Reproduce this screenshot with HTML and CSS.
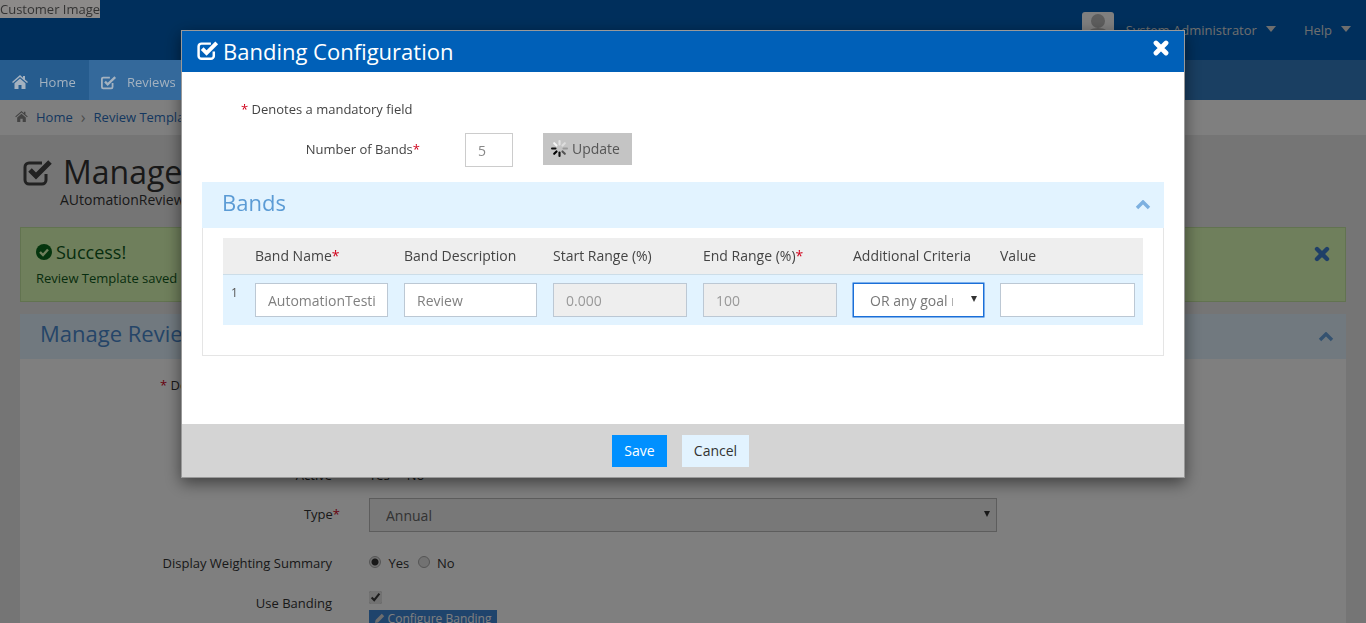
FILE: index.html
```html
<!DOCTYPE html>
<html lang="en">
<head>
    <meta charset="UTF-8">
    <meta name="viewport" content="width=device-width, initial-scale=1.0">
    <title>Banding Configuration</title>
    <link rel="stylesheet" href="styles.css">
</head>
<body>

<!-- page behind the dialog -->
<header class="topbar">
    <span class="customer-image">Customer Image</span>
    <div class="user-menu">
        <svg class="avatar" width="32" height="26" viewBox="0 0 32 26"><rect width="32" height="26" rx="3" fill="#fff"/><circle cx="16" cy="9" r="7" fill="#bbb"/><path d="M4 26c0-7 5-10 12-10s12 3 12 10z" fill="#bbb"/></svg>
        <span class="user-name">System Administrator</span><span class="caret"></span>
        <span class="help">Help</span><span class="caret"></span>
    </div>
</header>

<nav class="mainnav">
    <a class="nav-tab nav-home">
        <svg width="16" height="14" viewBox="0 0 16 14"><path d="M8 0 0 7l1 1 7-6 7 6 1-1-3-2.600V1h-2v1.800zM2.500 8.200V14H6.500V10h3v4h4V8.200L8 3.500z" fill="#a4b2c0"/></svg>
        Home
    </a>
    <a class="nav-tab nav-reviews">
        <svg width="16" height="15" viewBox="0 0 18 16"><path d="M13 8.500V13a1.500 1.500 0 0 1-1.500 1.500h-9A1.500 1.500 0 0 1 1 13V4a1.500 1.500 0 0 1 1.500-1.500H10" fill="none" stroke="#a4b2c0" stroke-width="2"/><path d="m4.500 7 3 3L16 2" fill="none" stroke="#a4b2c0" stroke-width="2.600"/></svg>
        Reviews
    </a>
</nav>

<div class="breadcrumb">
    <svg width="13" height="11" viewBox="0 0 16 14"><path d="M8 0 0 7l1 1 7-6 7 6 1-1-3-2.600V1h-2v1.800zM2.500 8.200V14H6.500V10h3v4h4V8.200L8 3.500z" fill="#888"/></svg>
    <a>Home</a>
    <span class="crumb-sep">&rsaquo;</span>
    <a>Review Templates</a>
</div>

<main class="content">
    <div class="page-title">
        <svg width="30" height="29" viewBox="0 0 30 29"><path d="M23 16v6a4 4 0 0 1-4 4H6a4 4 0 0 1-4-4V9a4 4 0 0 1 4-4h13" fill="none" stroke="#444" stroke-width="3"/><path d="m7 12 6 6L27 4" fill="none" stroke="#444" stroke-width="5"/></svg>
        <h1>Manage</h1>
    </div>
    <div class="page-sub">AUtomationReview</div>

    <div class="alert">
        <div class="alert-title">
            <svg width="16" height="16" viewBox="0 0 16 16"><circle cx="8" cy="8" r="8" fill="#0a6a1c"/><path d="m4 8 3 3 5-5.500" fill="none" stroke="#dfffb8" stroke-width="2.400"/></svg>
            Success!
        </div>
        <div class="alert-text">Review Template saved</div>
        <svg class="alert-close" width="16" height="16" viewBox="0 0 16 16"><path d="M3 3l10 10M13 3 3 13" stroke="#3f7fd0" stroke-width="4.400" stroke-linecap="round"/></svg>
    </div>

    <section class="panel">
        <div class="panel-head">
            <h2>Manage Review</h2>
            <svg class="chevron" width="16" height="10" viewBox="0 0 16 10"><path d="M2 8l6-6 6 6" fill="none" stroke="#6aa5e0" stroke-width="3.400"/></svg>
        </div>
        <div class="panel-body">
            <div class="required-note"><span class="star">*</span> Denotes</div>
            <div class="row row-active">
                <label class="row-label">Active</label>
                <div class="row-field">Yes &nbsp; &nbsp; No</div>
            </div>
            <div class="row row-type">
                <label class="row-label">Type<span class="star star-hang">*</span></label>
                <div class="select-wrap type-select">
                    <select><option>Annual</option></select>
                </div>
            </div>
            <div class="row row-weighting">
                <label class="row-label">Display Weighting Summary</label>
                <div class="row-field">
                    <input type="radio" class="radio" name="weight" checked> <span class="radio-text">Yes</span>
                    <input type="radio" class="radio" name="weight"> <span class="radio-text">No</span>
                </div>
            </div>
            <div class="row row-banding">
                <label class="row-label">Use Banding</label>
                <div class="banding-field">
                    <input type="checkbox" checked>
                    <button class="btn-configure">
                        <svg width="10" height="10" viewBox="0 0 10 10"><path d="M0 10l.6-3L6.800.8l2.400 2.400L3 9.400z" fill="#ddd"/></svg>
                        Configure Banding
                    </button>
                </div>
            </div>
        </div>
    </section>
</main>

<!-- dialog -->
<div class="overlay">
    <div class="modal">
        <div class="modal-head">
            <svg width="22" height="21" viewBox="0 0 30 29"><path d="M23 16v6a4 4 0 0 1-4 4H6a4 4 0 0 1-4-4V9a4 4 0 0 1 4-4h13" fill="none" stroke="#fff" stroke-width="3.400"/><path d="m7 12 6 6L27 4" fill="none" stroke="#fff" stroke-width="5.500"/></svg>
            <h3>Banding Configuration</h3>
            <svg class="modal-close" width="16" height="16" viewBox="0 0 16 16"><path d="M3 3l10 10M13 3 3 13" stroke="#fff" stroke-width="4.800" stroke-linecap="round"/></svg>
        </div>

        <div class="modal-body">
            <div class="mandatory"><span class="star">*</span> Denotes a mandatory field</div>

            <div class="bands-count">
                <label for="bandCount">Number of Bands<span class="star">*</span></label>
                <input type="text" id="bandCount" class="count-input" value="5">
                <button class="btn-update">
                    <svg width="17" height="17" viewBox="0 0 16 16" stroke-width="2" stroke-linecap="round">
                        <path d="M8 1v3.200" stroke="#e4e4e4"/>
                        <path d="M13 3l-2.200 2.200" stroke="#ddd"/>
                        <path d="M15 8h-3.200" stroke="#999"/>
                        <path d="M13 13l-2.200-2.200" stroke="#555"/>
                        <path d="M8 15v-3.200" stroke="#111"/>
                        <path d="M3 13l2.200-2.200" stroke="#000"/>
                        <path d="M1 8h3.200" stroke="#111"/>
                        <path d="M3 3l2.200 2.200" stroke="#f4f4f4"/>
                    </svg>
                    Update
                </button>
            </div>

            <div class="bands-head">
                <h4>Bands</h4>
                <svg class="chevron" width="16" height="10" viewBox="0 0 16 10"><path d="M2 8l6-6 6 6" fill="none" stroke="#7db0e0" stroke-width="3.400"/></svg>
            </div>
            <div class="bands-body">
                <div class="band-grid band-header">
                    <span></span>
                    <span>Band Name<span class="star">*</span></span>
                    <span>Band Description</span>
                    <span>Start Range (%)</span>
                    <span>End Range (%)<span class="star">*</span></span>
                    <span>Additional Criteria</span>
                    <span>Value</span>
                </div>
                <div class="band-grid band-row">
                    <span class="band-num">1</span>
                    <input type="text" class="band-input" value="AutomationTesting">
                    <input type="text" class="band-input" value="Review">
                    <input type="text" class="band-input" value="0.000" disabled>
                    <input type="text" class="band-input" value="100" disabled>
                    <div class="select-wrap criteria-select">
                        <select><option>OR any goal rating is below</option></select>
                    </div>
                    <input type="text" class="band-input">
                </div>
            </div>
        </div>

        <div class="modal-foot">
            <button class="btn-save">Save</button>
            <button class="btn-cancel">Cancel</button>
        </div>
    </div>
</div>

</body>
</html>
```

FILE: styles.css
```css
html, body {
    height: 623px;
    overflow: hidden;
}

body {
    font-family: "Open Sans", sans-serif;
    font-size: 13px;
    color: #333;
    margin: 0;
    padding: 0;
    background-color: #ebebeb;
}

.star {
    color: #d0021b;
}

/* page behind the dialog */
.topbar {
    height: 60px;
    background-color: #005fb8;
    display: flex;
    justify-content: space-between;
}

.customer-image {
    position: relative;
    z-index: 20;
    align-self: flex-start;
    height: 18px;
    line-height: 18px;
    font-size: 13px;
    color: #333;
    background-color: #8c8a89;
}

.user-menu {
    display: flex;
    align-items: flex-start;
    color: #ddd;
    font-size: 13px;
    padding: 12px 15px 0 0;
}

.avatar {
    margin-right: 12px;
}

.user-name,
.help {
    margin-top: 8px;
    line-height: 20px;
}

.help {
    margin-left: 28px;
}

.caret {
    width: 0;
    height: 0;
    margin: 14px 0 0 9px;
    border-top: 6px solid #ddd;
    border-left: 5px solid transparent;
    border-right: 5px solid transparent;
}

.mainnav {
    height: 40px;
    background-color: #347ec4;
    display: flex;
}

/* these two tabs are brighter than the dimming layer lets through */
.nav-tab {
    position: relative;
    z-index: 20;
    display: flex;
    align-items: center;
    color: #a4b2c0;
    font-size: 13px;
    padding: 4px 0 0 12px;
    box-sizing: border-box;
}

.nav-home {
    width: 89px;
    gap: 11px;
    background-color: #265c8e;
}

.nav-reviews {
    width: 92px;
    gap: 10px;
    background-color: #34699b;
}

.breadcrumb {
    height: 35px;
    padding-bottom: 2px;
    box-sizing: border-box;
    background-color: #fff;
    display: flex;
    align-items: center;
    gap: 8px;
    padding-left: 15px;
}

.breadcrumb a {
    color: #2a6fc0;
}

.crumb-sep {
    color: #999;
    font-size: 16px;
    line-height: 16px;
}

.content {
    padding: 0 20px;
}

.page-title {
    display: flex;
    align-items: center;
    gap: 10px;
    padding: 18px 0 0 3px;
}

.page-title h1 {
    margin: 0;
    font-size: 32px;
    font-weight: normal;
    line-height: 38px;
    white-space: nowrap;
}

.page-sub {
    font-size: 14px;
    line-height: 18px;
    padding-left: 40px;
}

.alert {
    position: relative;
    height: 75px;
    box-sizing: border-box;
    margin-top: 18px;
    padding: 12px 15px;
    background-color: #dfffb8;
    border: 1px solid #c4e6a0;
}

.alert-title {
    display: flex;
    align-items: center;
    gap: 4px;
    font-size: 18px;
    line-height: 24px;
    color: #0f5a20;
}

.alert-text {
    color: #0f5a20;
    line-height: 20px;
    margin-top: 4px;
}

.alert-close {
    position: absolute;
    top: 18px;
    right: 15px;
}

.panel {
    margin-top: 12px;
}

.panel-head {
    height: 45px;
    box-sizing: border-box;
    background-color: #e2f3ff;
    display: flex;
    align-items: center;
    justify-content: space-between;
    padding: 0 12px 8px 20px;
}

.panel-head h2 {
    margin: 0;
    font-size: 22px;
    font-weight: normal;
    color: #4a8ad0;
}

.panel-head .chevron {
    margin-top: 8px;
}

.panel-body {
    background-color: #fff;
    height: 300px;
    padding-top: 16px;
    box-sizing: border-box;
}

.required-note {
    line-height: 20px;
    padding-left: 140px;
}

.row {
    display: flex;
    align-items: center;
}

.row-label {
    width: 312px;
    padding-right: 8px;
    text-align: right;
    flex-shrink: 0;
}

.star-hang {
    margin-right: -8px;
}

.row-field,
.banding-field {
    margin-left: 29px;
}

.row-active {
    margin-top: 70px;
    height: 20px;
}

.row-type {
    margin-top: 13px;
}

.row-type .row-label {
    padding-bottom: 2px;
}

.row-weighting {
    margin-top: 21px;
    height: 20px;
}

.row-banding {
    margin-top: 18px;
    align-items: flex-start;
}

.row-banding .row-label {
    margin-top: 3px;
}

.banding-field {
    display: flex;
    flex-direction: column;
    align-items: flex-start;
}

.banding-field input {
    accent-color: #e4e4e4;
    margin: 0 0 6px;
}

.radio {
    appearance: none;
    width: 12px;
    height: 12px;
    margin: 0 2px 0 0;
    position: relative;
    top: -3px;
    vertical-align: middle;
    border: 1px solid #aaa;
    border-radius: 50%;
    background-color: #e4e4e4;
}

.radio:checked {
    background: radial-gradient(circle, #333 0 3px, #e4e4e4 4px);
}

.radio-text {
    margin: 0 5px 0 2px;
}

.btn-configure {
    font-family: inherit;
    font-size: 12px;
    line-height: 17px;
    color: #fff;
    background-color: #3f88d8;
    border: none;
    padding: 0 5px;
    height: 17px;
    width: 128px;
    white-space: nowrap;
}

.select-wrap {
    position: relative;
    box-sizing: border-box;
}

.select-wrap select {
    appearance: none;
    width: 100%;
    height: 100%;
    font-family: inherit;
    font-size: 14px;
    color: #777;
    background-color: #fff;
    border-radius: 0;
    outline: none;
}

.select-wrap::after {
    content: "";
    position: absolute;
    top: 13px;
    right: 7px;
    border-top: 6px solid #333;
    border-left: 3.500px solid transparent;
    border-right: 3.500px solid transparent;
}

.type-select {
    width: 628px;
    height: 34px;
    margin-left: 29px;
}

.type-select select {
    border: 1px solid #bbb;
    padding: 0 16px;
    background-color: #f0f0f0;
    color: #666;
}

/* dialog */
.overlay {
    position: fixed;
    top: 0;
    left: 0;
    width: 100%;
    height: 100%;
    z-index: 10;
    background-color: rgba(0, 0, 0, 0.5);
    display: flex;
    justify-content: center;
    align-items: flex-start;
    padding-top: 30px;
    box-sizing: border-box;
}

.modal {
    width: 1004px;
    height: 448px;
    box-sizing: border-box;
    border: 1px solid #999;
    background-color: #fff;
    box-shadow: 0 5px 15px rgba(0, 0, 0, 0.5);
    display: flex;
    flex-direction: column;
}

.modal-head {
    height: 41px;
    flex-shrink: 0;
    padding-bottom: 2px;
    box-sizing: border-box;
    background-color: #0060b8;
    color: #fff;
    display: flex;
    align-items: center;
    gap: 4px;
    padding-left: 15px;
    padding-right: 15px;
}

.modal-head h3 {
    margin: 0;
    font-size: 22px;
    font-weight: normal;
}

.modal-close {
    margin-left: auto;
    margin-top: -5px;
}

.modal-body {
    flex: 1;
    padding: 0 20px;
}

.mandatory {
    line-height: 20px;
    color: #444;
    padding: 27px 0 0 39px;
}

.bands-count {
    display: flex;
    align-items: flex-start;
    margin-top: 14px;
}

.bands-count label {
    width: 218px;
    text-align: right;
    line-height: 32px;
    color: #444;
    flex-shrink: 0;
}

.count-input {
    width: 48px;
    height: 34px;
    box-sizing: border-box;
    margin-left: 45px;
    padding: 0 12px;
    font-family: inherit;
    font-size: 14px;
    color: #888;
    border: 1px solid #ccc;
}

.btn-update {
    display: flex;
    align-items: center;
    gap: 4px;
    height: 32px;
    width: 89px;
    box-sizing: border-box;
    margin-left: 30px;
    padding: 0 0 2px 8px;
    font-family: inherit;
    font-size: 14px;
    color: #555;
    background-color: #c4c4c4;
    border: none;
}

.bands-head {
    height: 46px;
    box-sizing: border-box;
    margin-top: 15px;
    background-color: #e2f3ff;
    display: flex;
    align-items: center;
    justify-content: space-between;
    padding: 0 13px 6px 20px;
}

.bands-head h4 {
    margin: 0;
    font-size: 22px;
    font-weight: normal;
    color: #5b9bd5;
}

.bands-head .chevron {
    margin-top: 6px;
}

.bands-body {
    height: 128px;
    box-sizing: border-box;
    border: 1px solid #e5e5e5;
    border-top: none;
    padding: 10px 20px 0;
}

.band-grid {
    display: grid;
    grid-template-columns: 16px 133px 133px 134px 134px 131px 135px;
    column-gap: 16px;
    padding-right: 8px;
}

.band-header {
    height: 37px;
    box-sizing: border-box;
    background-color: #eee;
    border-bottom: 1px solid #ccdde8;
    font-size: 14px;
    line-height: 35px;
    color: #444;
    white-space: nowrap;
}

.band-row {
    height: 50px;
    box-sizing: border-box;
    padding-top: 8px;
    background-color: #e2f3ff;
}

.band-num {
    padding-left: 8px;
    font-size: 12px;
    color: #555;
    line-height: 20px;
}

.band-input {
    width: 100%;
    height: 34px;
    box-sizing: border-box;
    padding: 0 12px;
    font-family: inherit;
    font-size: 14px;
    color: #808080;
    background-color: #fff;
    border: 1px solid #bcc8d4;
    border-radius: 0;
}

.band-input:disabled {
    background-color: #eee;
    color: #999;
}

.criteria-select {
    height: 34px;
}

.criteria-select select {
    border: 1px solid #1a6fd8;
    box-shadow: 0 0 0 0.500px #1a6fd8;
    padding: 0 30px 0 16px;
}

.modal-foot {
    height: 53px;
    flex-shrink: 0;
    background-color: #d4d4d4;
    box-sizing: border-box;
    display: flex;
    justify-content: center;
    align-items: flex-start;
    gap: 15px;
    padding-top: 11px;
    padding-right: 5px;
}

.btn-save,
.btn-cancel {
    height: 32px;
    padding: 0 0 2px;
    font-family: inherit;
    font-size: 14px;
    border: none;
    border-radius: 0;
}

.btn-save {
    width: 55px;
    color: #fff;
    background-color: #0090ff;
}

.btn-cancel {
    width: 67px;
    color: #333;
    background-color: #e2f3ff;
}
```
